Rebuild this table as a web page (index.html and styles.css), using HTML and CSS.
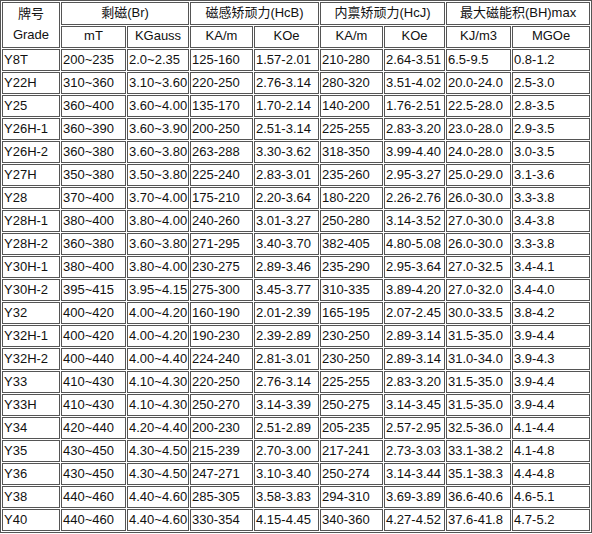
FILE: index.html
```html
<!DOCTYPE html>
<html>
<head>
<meta charset="utf-8">
<link rel="stylesheet" href="styles.css">
</head>
<body>
<table class="spec">
<colgroup>
<col class="c1"><col class="c2"><col class="c3"><col class="c4"><col class="c5"><col class="c6"><col class="c7"><col class="c8"><col class="c9">
</colgroup>
<tr class="head"><td rowspan="2" class="grade">牌号<br>Grade</td><td colspan="2">剩磁(Br)</td><td colspan="2">磁感矫顽力(HcB)</td><td colspan="2">内禀矫顽力(HcJ)</td><td colspan="2">最大磁能积(BH)max</td></tr>
<tr class="head"><td>mT</td><td>KGauss</td><td>KA/m</td><td>KOe</td><td>KA/m</td><td>KOe</td><td>KJ/m3</td><td>MGOe</td></tr>
<tr><td>Y8T</td><td>200~235</td><td>2.0~2.35</td><td>125-160</td><td>1.57-2.01</td><td>210-280</td><td>2.64-3.51</td><td>6.5-9.5</td><td>0.8-1.2</td></tr>
<tr><td>Y22H</td><td>310~360</td><td>3.10~3.60</td><td>220-250</td><td>2.76-3.14</td><td>280-320</td><td>3.51-4.02</td><td>20.0-24.0</td><td>2.5-3.0</td></tr>
<tr><td>Y25</td><td>360~400</td><td>3.60~4.00</td><td>135-170</td><td>1.70-2.14</td><td>140-200</td><td>1.76-2.51</td><td>22.5-28.0</td><td>2.8-3.5</td></tr>
<tr><td>Y26H-1</td><td>360~390</td><td>3.60~3.90</td><td>200-250</td><td>2.51-3.14</td><td>225-255</td><td>2.83-3.20</td><td>23.0-28.0</td><td>2.9-3.5</td></tr>
<tr><td>Y26H-2</td><td>360~380</td><td>3.60~3.80</td><td>263-288</td><td>3.30-3.62</td><td>318-350</td><td>3.99-4.40</td><td>24.0-28.0</td><td>3.0-3.5</td></tr>
<tr><td>Y27H</td><td>350~380</td><td>3.50~3.80</td><td>225-240</td><td>2.83-3.01</td><td>235-260</td><td>2.95-3.27</td><td>25.0-29.0</td><td>3.1-3.6</td></tr>
<tr><td>Y28</td><td>370~400</td><td>3.70~4.00</td><td>175-210</td><td>2.20-3.64</td><td>180-220</td><td>2.26-2.76</td><td>26.0-30.0</td><td>3.3-3.8</td></tr>
<tr><td>Y28H-1</td><td>380~400</td><td>3.80~4.00</td><td>240-260</td><td>3.01-3.27</td><td>250-280</td><td>3.14-3.52</td><td>27.0-30.0</td><td>3.4-3.8</td></tr>
<tr><td>Y28H-2</td><td>360~380</td><td>3.60~3.80</td><td>271-295</td><td>3.40-3.70</td><td>382-405</td><td>4.80-5.08</td><td>26.0-30.0</td><td>3.3-3.8</td></tr>
<tr><td>Y30H-1</td><td>380~400</td><td>3.80~4.00</td><td>230-275</td><td>2.89-3.46</td><td>235-290</td><td>2.95-3.64</td><td>27.0-32.5</td><td>3.4-4.1</td></tr>
<tr><td>Y30H-2</td><td>395~415</td><td>3.95~4.15</td><td>275-300</td><td>3.45-3.77</td><td>310-335</td><td>3.89-4.20</td><td>27.0-32.0</td><td>3.4-4.0</td></tr>
<tr><td>Y32</td><td>400~420</td><td>4.00~4.20</td><td>160-190</td><td>2.01-2.39</td><td>165-195</td><td>2.07-2.45</td><td>30.0-33.5</td><td>3.8-4.2</td></tr>
<tr><td>Y32H-1</td><td>400~420</td><td>4.00~4.20</td><td>190-230</td><td>2.39-2.89</td><td>230-250</td><td>2.89-3.14</td><td>31.5-35.0</td><td>3.9-4.4</td></tr>
<tr><td>Y32H-2</td><td>400~440</td><td>4.00~4.40</td><td>224-240</td><td>2.81-3.01</td><td>230-250</td><td>2.89-3.14</td><td>31.0-34.0</td><td>3.9-4.3</td></tr>
<tr><td>Y33</td><td>410~430</td><td>4.10~4.30</td><td>220-250</td><td>2.76-3.14</td><td>225-255</td><td>2.83-3.20</td><td>31.5-35.0</td><td>3.9-4.4</td></tr>
<tr><td>Y33H</td><td>410~430</td><td>4.10~4.30</td><td>250-270</td><td>3.14-3.39</td><td>250-275</td><td>3.14-3.45</td><td>31.5-35.0</td><td>3.9-4.4</td></tr>
<tr><td>Y34</td><td>420~440</td><td>4.20~4.40</td><td>200-230</td><td>2.51-2.89</td><td>205-235</td><td>2.57-2.95</td><td>32.5-36.0</td><td>4.1-4.4</td></tr>
<tr><td>Y35</td><td>430~450</td><td>4.30~4.50</td><td>215-239</td><td>2.70-3.00</td><td>217-241</td><td>2.73-3.03</td><td>33.1-38.2</td><td>4.1-4.8</td></tr>
<tr><td>Y36</td><td>430~450</td><td>4.30~4.50</td><td>247-271</td><td>3.10-3.40</td><td>250-274</td><td>3.14-3.44</td><td>35.1-38.3</td><td>4.4-4.8</td></tr>
<tr><td>Y38</td><td>440~460</td><td>4.40~4.60</td><td>285-305</td><td>3.58-3.83</td><td>294-310</td><td>3.69-3.89</td><td>36.6-40.6</td><td>4.6-5.1</td></tr>
<tr><td>Y40</td><td>440~460</td><td>4.40~4.60</td><td>330-354</td><td>4.15-4.45</td><td>340-360</td><td>4.27-4.52</td><td>37.6-41.8</td><td>4.7-5.2</td></tr>
</table>
</body>
</html>
```
FILE: styles.css
```css
html, body {
  margin: 0;
  padding: 0;
  background: #fff;
}
.spec {
  table-layout: fixed;
  width: 592px;
  border-collapse: separate;
  border-spacing: 1px;
  border: 1px solid #555;
  font-family: "Liberation Sans", Arial, "Noto Sans CJK SC", sans-serif;
  font-size: 13px;
  color: #111;
}
.spec td {
  border: 1px solid #555;
  padding: 0 0 2px 1px;
  height: 18px;
  line-height: 17px;
  white-space: nowrap;
  overflow: hidden;
  text-align: left;
}
.spec .head td {
  text-align: center;
  padding: 0 0 2px 0;
}
.spec td.grade {
  line-height: 21px;
}
.c1 { width: 58px; }
.c2 { width: 65px; }
.c3 { width: 62px; }
.c4 { width: 63px; }
.c5 { width: 65px; }
.c6 { width: 63px; }
.c7 { width: 61px; }
.c8 { width: 65px; }
.c9 { width: 78px; }
```
